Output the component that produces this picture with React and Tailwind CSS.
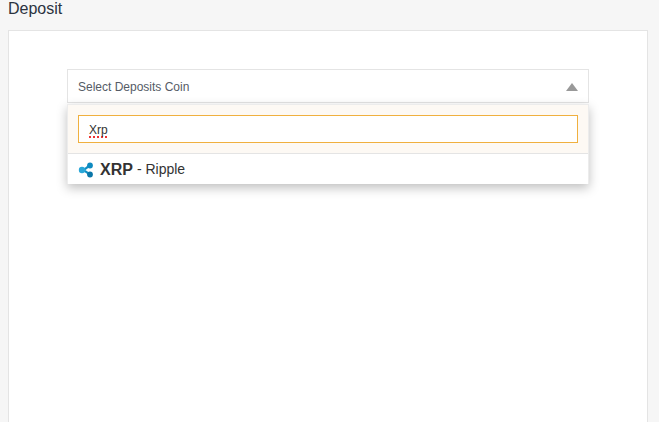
export default function App() {
  return (
    <div className="w-[659px] h-[422px] overflow-hidden bg-[#f6f6f6] font-['Liberation_Sans',Arial,sans-serif] pl-[8px] pr-[11px]">
      <div className="h-[30px] text-[16px] leading-[18px] text-[#2b3340]">Deposit</div>
      <div className="h-[420px] bg-white border border-[#e4e4e4] pt-[38px] px-[58px]">
        <div className="relative">
          <div className="h-[34px] border border-[#e4e4e4] bg-white flex items-center justify-between pl-[10px] pr-[10px]">
            <span className="text-[12px] text-[#555b66] pt-[1px]">Select Deposits Coin</span>
            <svg width="12" height="8" viewBox="0 0 12 8" className="mt-[1px]"><path d="M6 0L12 8H0Z" fill="#999999" /></svg>
          </div>
          <div className="mt-[1px] bg-white border-x border-t border-[#ececec] shadow-[0_4px_10px_rgba(0,0,0,0.25)]">
            <div className="bg-[#fdf9f4] h-[49px] px-[10px] pt-[10px] border-b border-[#e4e4e4]">
              <div className="h-[28px] bg-white border border-[#f0b03f] flex items-center pl-[10px] pt-[2px] text-[12px] text-[#333]">
                <span className="underline decoration-dotted decoration-[#e33] decoration-2 underline-offset-2">Xrp</span>
              </div>
            </div>
            <div className="h-[30px] flex items-center pl-[10px] pt-[1px]">
              <svg width="16" height="16" viewBox="0 0 16 16" className="mr-[6px]">
                <path d="M4 8C7 8 8 5.5 12 3.5M4 8C7 8 8 10.5 12 12.5" stroke="#0f8fc4" strokeWidth="2.2" fill="none" />
                <circle cx="4" cy="8" r="3.2" fill="#2aa7d8" />
                <circle cx="12" cy="3.5" r="2.9" fill="#0e8ac0" />
                <circle cx="12" cy="12.5" r="2.9" fill="#0a76a8" />
              </svg>
              <span className="text-[16px] font-bold text-[#333]">XRP</span>
              <span className="text-[14px] text-[#333] ml-[4px]">- Ripple</span>
            </div>
          </div>
        </div>
      </div>
    </div>
  );
}
